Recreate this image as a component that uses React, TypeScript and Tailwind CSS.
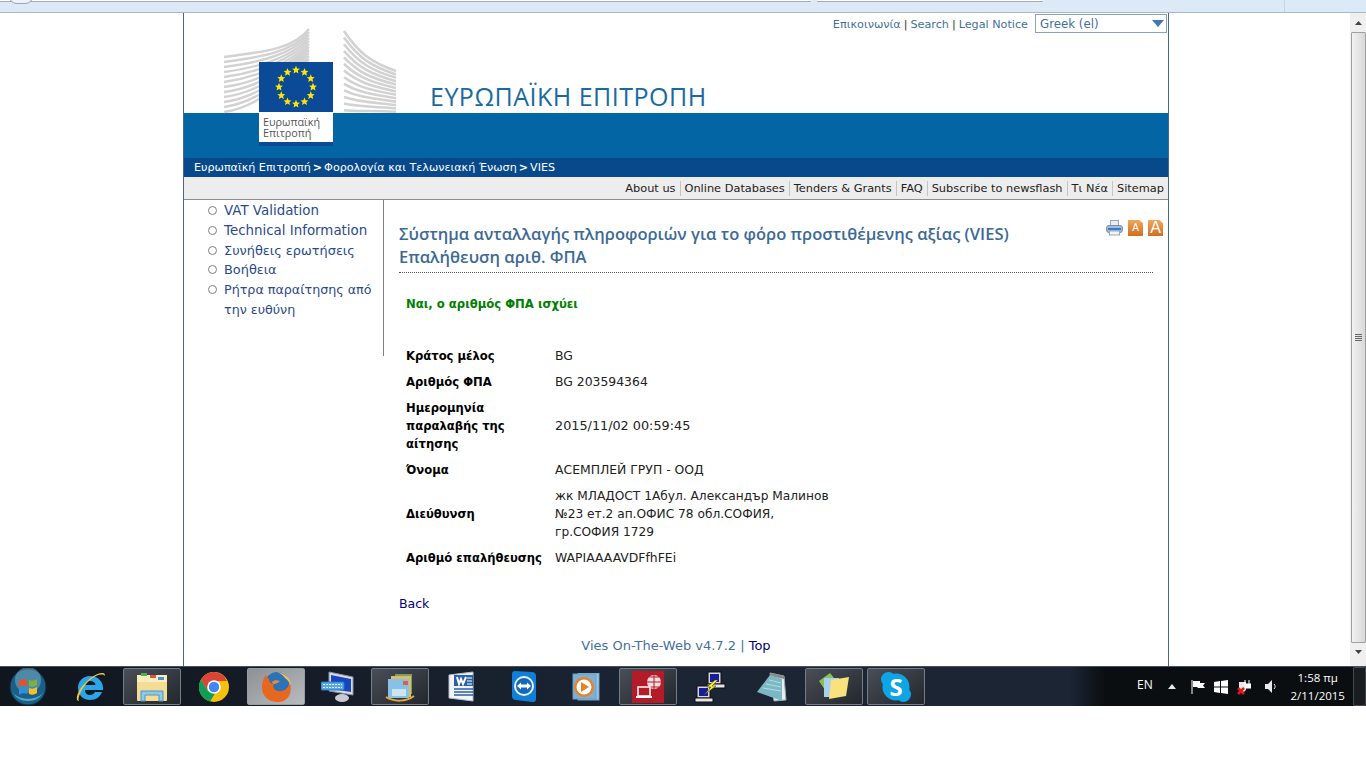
const NAV = ['About us', 'Online Databases', 'Tenders & Grants', 'FAQ', 'Subscribe to newsflash', 'Τι Νέα', 'Sitemap'];

const MENU = [
  { text: 'VAT Validation', size: 'text-[13.400px]' },
  { text: 'Technical Information', size: 'text-[13.400px]' },
  { text: 'Συνήθεις ερωτήσεις', size: 'text-[12.900px]' },
  { text: 'Βοήθεια', size: 'text-[12.900px]' },
  { text: 'Ρήτρα παραίτησης από την ευθύνη', size: 'text-[12.700px]' },
];

const ROWS = [
  { label: 'Κράτος μέλος', value: 'BG', size: 'text-[12.400px]' },
  { label: 'Αριθμός ΦΠΑ', value: 'BG 203594364', size: 'text-[12.400px]' },
  { label: 'Ημερομηνία παραλαβής της αίτησης', value: '2015/11/02 00:59:45', size: 'text-[12.800px]' },
  { label: 'Όνομα', value: 'АСЕМПЛЕЙ ГРУП - ООД', size: 'text-[12.400px]' },
  { label: 'Διεύθυνση', value: 'жк МЛАДОСТ 1Абул. Александър Малинов №23 ет.2 ап.ОФИС 78 обл.СОФИЯ, гр.СОФИЯ 1729', size: 'text-[12.200px]' },
  { label: 'Αριθμό επαλήθευσης', value: 'WAPIAAAAVDFfhFEi', size: 'text-[12.400px]' },
];

const starPoints = (cx: number, cy: number, r: number) =>
  Array.from({ length: 10 }, (_, i) => {
    const a = (i * Math.PI) / 5 - Math.PI / 2;
    const rad = i % 2 === 0 ? r : r * 0.45;
    return `${cx + rad * Math.cos(a)},${cy + rad * Math.sin(a)}`;
  }).join(' ');

const Logo = () => (
  <div className="absolute left-[36px] top-[11px] h-[125px] w-[180px]">
    <svg width="180" height="125" viewBox="220 24 180 125">
      {/* left wing */}
      {Array.from({ length: 12 }, (_, i) => (
        <path
          key={i}
          d={`M224 ${57 + i * 5} C 262 ${52 + i * 5}, 292 ${50 + i * 2}, 309 ${29 + i * 3}`}
          fill="none"
          stroke="#d2d2d2"
          strokeWidth="2.4"
        />
      ))}
      {/* right wing */}
      {Array.from({ length: 13 }, (_, i) => (
        <path
          key={i}
          d={`M344 ${31 + i * 6.6} C 358 ${52 + i * 5}, 370 ${62 + i * 4}, 396 ${71 + i * 3.4}`}
          fill="none"
          stroke="#d2d2d2"
          strokeWidth="2.6"
        />
      ))}
      <rect x="259" y="62" width="74" height="50" fill="#0b4a96" />
      <rect x="259" y="112" width="74" height="31" fill="#ffffff" />
      <rect x="259" y="142" width="74" height="4" fill="#0b4a96" />
      {Array.from({ length: 12 }, (_, i) => {
        const a = (i * Math.PI) / 6;
        return <polygon key={i} points={starPoints(296 + 17 * Math.sin(a), 87 - 17 * Math.cos(a), 4.2)} fill="#ffe600" />;
      })}
    </svg>
    <div className="absolute left-[43px] top-[92px] font-['Open_Sans',sans-serif] text-[10.800px] leading-[11px] text-[#555]">
      Ευρωπαϊκή
      <br />
      Επιτροπή
    </div>
  </div>
);

const PrintIcon = () => (
  <svg width="17" height="16" viewBox="0 0 17 16">
    <rect x="4.5" y="0.5" width="8" height="6" fill="#e9ecf1" stroke="#9aa6b4" />
    <rect x="0.5" y="5.5" width="16" height="7" rx="2.500" fill="#a9bbd0" stroke="#7d90a6" />
    <rect x="2" y="8" width="13" height="2" fill="#2b7fd6" />
    <rect x="3.5" y="11" width="10" height="4" fill="#f2f4f6" stroke="#9aa6b4" />
  </svg>
);

const FontIcon = ({ big }: { big?: boolean }) => (
  <span
    className={`flex h-[16px] w-[15px] items-center justify-center bg-gradient-to-b from-[#f2a658] to-[#d06f1e] font-['Liberation_Sans',sans-serif] leading-none text-white [clip-path:polygon(0_0,75%_0,100%_20%,100%_100%,0_100%)] ${big ? 'text-[16px]' : 'text-[10px]'}`}
  >
    A
  </span>
);

const Orb = () => (
  <svg width="38" height="38" viewBox="0 0 38 38">
    <circle cx="19" cy="19" r="18" fill="#1b5f86" stroke="#0d2c40" />
    <circle cx="19" cy="12" r="13" fill="#9cc8dc" opacity="0.4" />
    <path d="M10 13 C13 11 15 11 18 12 V18 C15 17 13 17 10 19 Z" fill="#e8502a" />
    <path d="M20 12 C23 13 25 13 28 11 V17 C25 19 23 19 20 18 Z" fill="#7cb13c" />
    <path d="M10 21 C13 19 15 19 18 20 V26 C15 25 13 25 10 27 Z" fill="#2f8fd8" />
    <path d="M20 20 C23 21 25 21 28 19 V25 C25 27 23 27 20 26 Z" fill="#f5c02c" />
    <path d="M4 24 C8 33 30 33 34 24 C30 36 8 36 4 24 Z" fill="#7fd8f0" opacity="0.6" />
  </svg>
);

const IeIcon = () => (
  <svg width="32" height="32" viewBox="0 0 32 32">
    <path d="M16 5 C9 5 4 10 4 17 C4 24 9 29 16 29 C22 29 26 26 28 21 H21 C20 23 18 24 16 24 C13 24 11 22 11 19 H29 C30 11 24 5 16 5 Z M11 14 C11 11 13 10 16 10 C19 10 21 11 21.500 14 Z" fill="#2aa5e8" />
    <path d="M29 2 C24 1 12 8 5 20 C2 26 2 30 5 30 C3 27 8 16 16 9 C22 4 28 2 31 5 C31 3 30 2 29 2 Z" fill="#f0c93a" />
  </svg>
);

const FolderIcon = () => (
  <svg width="34" height="32" viewBox="0 0 34 32">
    <rect x="2" y="4" width="30" height="26" rx="1" fill="#f3dc93" />
    <rect x="2" y="4" width="30" height="7" fill="#fbeebc" />
    <rect x="6" y="2" width="6" height="3" fill="#4caf50" />
    <rect x="15" y="4" width="6" height="3" fill="#d9534f" />
    <rect x="23" y="6" width="6" height="3" fill="#4a90d9" />
    <path d="M6 30 V20 H28 V30 H24 V24 H10 V30 Z" fill="#8fc8ea" stroke="#4d94c4" />
  </svg>
);

const ChromeIcon = () => (
  <svg width="30" height="30" viewBox="0 0 30 30">
    <circle cx="15" cy="15" r="15" fill="#f4c20d" />
    <path d="M15 0 A15 15 0 0 0 2 7.500 L8.500 18.500 L15 9 H28 A15 15 0 0 0 15 0 Z" fill="#db4437" />
    <path d="M2 7.500 A15 15 0 0 0 11 29.500 L17.500 19 L8.500 18.500 Z" fill="#0f9d58" />
    <circle cx="15" cy="15" r="6.800" fill="#fff" />
    <circle cx="15" cy="15" r="5.200" fill="#4285f4" />
  </svg>
);

const FirefoxIcon = () => (
  <svg width="32" height="32" viewBox="0 0 32 32">
    <circle cx="17" cy="13" r="12" fill="#2b72b8" />
    <path d="M6 4 C1 10 1 19 4 24 C8 31 19 33 25 29 C30 26 32 20 30 11 C29 17 24 21 18 20 C14 19 12 16 14 13 C11 13 9 11 9 8 C8 7 7 6 6 4 Z" fill="#e8671f" />
    <path d="M17 1 C24 2 31 7 31 15 C30 12 28 9 25 7 C23 4 20 2 17 1 Z" fill="#f6c344" />
    <path d="M12 11 C14 9 17 9 20 10 C18 12 16 13 14 13 C13 13 12 12 12 11 Z" fill="#ef8a2d" />
  </svg>
);

const KeyboardIcon = () => (
  <svg width="34" height="32" viewBox="0 0 34 32">
    <path d="M8 1 L32 6 V24 L8 20 Z" fill="#d7dce4" stroke="#8b94a0" />
    <path d="M10 4 L30 8 V21 L10 18 Z" fill="#1746c0" />
    <ellipse cx="21" cy="27" rx="7" ry="4" fill="#c7ccd2" />
    <rect x="0" y="11" width="23" height="8" rx="1" fill="#58a8e8" stroke="#2b78b8" />
    <path d="M2 13.500 H21 M2 16.500 H21" stroke="#d8ecff" strokeDasharray="2 1" />
  </svg>
);

const OutlookIcon = () => (
  <svg width="32" height="32" viewBox="0 0 32 32">
    <rect x="11" y="3" width="17" height="20" fill="#7ba05b" />
    <rect x="7" y="5" width="20" height="21" fill="#e2b86a" />
    <rect x="4" y="8" width="21" height="19" fill="#86c1e6" />
    <rect x="19" y="10" width="5" height="4" fill="#d9604a" />
    <rect x="8" y="18" width="14" height="7" fill="#cfe4f3" />
    <path d="M2 26 C10 31 22 31 30 25" stroke="#e5a83a" strokeWidth="2" fill="none" />
  </svg>
);

const WordIcon = () => (
  <svg width="32" height="32" viewBox="0 0 32 32">
    <path d="M3 4 L27 1 V30 L3 27 Z" fill="#f2f4f8" stroke="#b4bfcc" />
    <path d="M8 4 H27 V15 H8 Z" fill="#2b5fa8" />
    <path d="M11 6 L13 13 L15 8 L17 13 L20 6" stroke="#fff" strokeWidth="2" fill="none" />
    <path d="M21 7 H26 M21 10 H26 M21 13 H26" stroke="#fff" />
    <path d="M8 18 H27 M8 21 H27 M8 24 H27" stroke="#2b5fa8" strokeWidth="1.500" />
  </svg>
);

const TeamViewerIcon = () => (
  <svg width="26" height="32" viewBox="0 0 26 32">
    <path d="M1 3 C1 1 2 0 4 0 L21 1 C24 1 25 3 25 5 V28 C25 31 23 31 21 31 L5 29 C2 29 1 27 1 25 Z" fill="#0f7fd8" />
    <circle cx="13" cy="15" r="10" fill="#e8f2fb" />
    <circle cx="13" cy="15" r="8" fill="#1668b8" />
    <path d="M6 15 L10 11.500 V13.500 H16 V11.500 L20 15 L16 18.500 V16.500 H10 V18.500 Z" fill="#fff" />
  </svg>
);

const MediaIcon = () => (
  <svg width="28" height="28" viewBox="0 0 28 28">
    <rect x="6" y="0" width="21" height="27" fill="#9dc6e4" stroke="#6f9cbf" />
    <rect x="1" y="1" width="23" height="25" fill="#7fb0d4" stroke="#6f9cbf" />
    <circle cx="12" cy="14" r="10" fill="#e9812b" />
    <circle cx="12" cy="14" r="7.500" fill="#fff" />
    <path d="M9 9 L17 14 L9 19 Z" fill="#e9812b" />
  </svg>
);

const RedAppIcon = () => (
  <svg width="32" height="32" viewBox="0 0 32 32">
    <rect width="32" height="32" fill="#b31b28" />
    <circle cx="22" cy="11" r="7" fill="#fff" opacity="0.85" />
    <path d="M15 11 H29 M22 4 V18 M17 6 H27 M17 16 H27" stroke="#b31b28" />
    <rect x="6" y="16" width="12" height="9" fill="#b31b28" stroke="#fff" strokeWidth="1.500" />
    <rect x="4" y="25" width="16" height="2" fill="#fff" />
  </svg>
);

const PuttyIcon = () => (
  <svg width="32" height="32" viewBox="0 0 32 32">
    <rect x="14" y="1" width="13" height="12" fill="#d8d8d8" stroke="#111" />
    <rect x="16" y="3" width="9" height="8" fill="#1a1a9c" />
    <rect x="13" y="13" width="18" height="4" fill="#e4e4e4" stroke="#111" />
    <rect x="3" y="15" width="13" height="12" fill="#d8d8d8" stroke="#111" />
    <rect x="5" y="17" width="9" height="8" fill="#1a1a9c" />
    <rect x="1" y="27" width="18" height="4" fill="#e4e4e4" stroke="#111" />
    <path d="M21 9 L13 16 H17 L10 24 L22 15 H18 L24 9 Z" fill="#ffee22" stroke="#333" strokeWidth="0.500" />
  </svg>
);

const NotepadIcon = () => (
  <svg width="32" height="32" viewBox="0 0 32 32">
    <path d="M14 2 L28 5 L30 29 L18 30 Z" fill="#e8eef0" stroke="#9aa6ac" />
    <path d="M14 2 L28 5 L28 8 L14 5 Z" fill="#8a8a8a" />
    <path d="M14 4 L26 8 L26 30 L1 21 Z" fill="#7cb8c4" />
    <path d="M13 9 L25 12 M10 13 L25 16 M7 17 L25 20" stroke="#b4dde4" />
  </svg>
);

const StickyIcon = () => (
  <svg width="32" height="32" viewBox="0 0 32 32">
    <path d="M1 10 L12 2 L20 12 L9 22 Z" fill="#8cc152" />
    <path d="M6 7 H21 V26 H6 Z" fill="#a9d1ee" />
    <path d="M13 9 L31 6 L28 25 L11 28 Z" fill="#f9e27c" />
  </svg>
);

const SkypeIcon = () => (
  <span className="relative flex h-[32px] w-[32px] items-center justify-center font-['Open_Sans',sans-serif] text-[24px] font-bold leading-none text-white">
    <svg width="32" height="32" viewBox="0 0 32 32" className="absolute inset-0">
      <circle cx="16" cy="16" r="13.500" fill="#0ea5e6" />
      <circle cx="8.500" cy="8.500" r="7.500" fill="#0ea5e6" />
      <circle cx="23.500" cy="23.500" r="7.500" fill="#0ea5e6" />
    </svg>
    <span className="relative">S</span>
  </span>
);

const TASKS = [
  { icon: <IeIcon /> },
  { icon: <FolderIcon />, open: true },
  { icon: <ChromeIcon /> },
  { icon: <FirefoxIcon />, open: true, active: true },
  { icon: <KeyboardIcon /> },
  { icon: <OutlookIcon />, open: true },
  { icon: <WordIcon /> },
  { icon: <TeamViewerIcon /> },
  { icon: <MediaIcon /> },
  { icon: <RedAppIcon />, open: true },
  { icon: <PuttyIcon /> },
  { icon: <NotepadIcon /> },
  { icon: <StickyIcon />, open: true },
  { icon: <SkypeIcon />, open: true },
];

const Taskbar = () => (
  <div className="flex h-[40px] items-stretch border-t border-[#46515e] bg-gradient-to-r from-[#10161e] via-[#1b2534] to-[#1b2534] pl-[1px] font-['Open_Sans',sans-serif]">
    <div className="flex w-[60px] items-center pl-[8px]">
      <Orb />
    </div>
    <div className="flex gap-1 py-[1px]">
      {TASKS.map((t, i) => (
        <div
          key={i}
          className={`flex w-[58px] items-center justify-center rounded-[2px] ${
            t.active
              ? 'border border-[#9a9ea3] bg-gradient-to-br from-[#8d9094] to-[#b9bcbf]'
              : t.open
                ? 'border border-[#777d85] bg-gradient-to-br from-[#4a4f57] to-[#23282f]'
                : ''
          }`}
        >
          {t.icon}
        </div>
      ))}
    </div>
    <div className="ml-auto flex w-[296px] items-center bg-gradient-to-r from-[#1b2534] to-[#0b0e11] to-[12%] text-white">
      <span className="ml-[67px] mb-[4px] text-[12px]">EN</span>
      <svg width="8" height="5" viewBox="0 0 8 5" className="ml-[15px]">
        <path d="M0 5 L4 0 L8 5 Z" fill="#e8e8e8" />
      </svg>
      <svg width="15" height="14" viewBox="0 0 15 14" className="ml-[15px]">
        <path d="M1 0 V14" stroke="#fff" />
        <path d="M2 1 H9 V3 H14 L12 5.500 L14 8 H7 L6 7 H2 Z" fill="#fff" />
      </svg>
      <svg width="14" height="14" viewBox="0 0 14 14" className="ml-[8px]">
        <path d="M0 2 L6 1 V6.500 H0 Z M7 1 L14 0 V6.500 H7 Z M0 7.500 H6 V13 L0 12 Z M7 7.500 H14 V14 L7 13 Z" fill="#fff" />
      </svg>
      <svg width="14" height="16" viewBox="0 0 14 16" className="ml-[9px]">
        <path d="M2 3 H9 V10 C9 12 7 13 5 13 H2 Z" fill="#e8e8e8" />
        <path d="M8 1 V5 M12 1 V5 M7 5 H14 V9 H8" stroke="#fff" fill="#fff" />
        <path d="M1 9 L7 15 M7 9 L1 15" stroke="#e01818" strokeWidth="2.500" />
      </svg>
      <svg width="12" height="13" viewBox="0 0 12 13" className="ml-[14px]">
        <path d="M0 4 H3 L7 0 V13 L3 9 H0 Z" fill="#e8e8e8" />
        <path d="M9 4 C10.500 5.500 10.500 7.500 9 9" stroke="#e8e8e8" fill="none" />
      </svg>
      <div className="ml-[10px] flex w-[62px] flex-col items-center text-[11.500px] leading-[18px]">
        <span>1:58 πμ</span>
        <span>2/11/2015</span>
      </div>
      <div className="ml-auto h-full w-[13px] self-stretch rounded-[1px] border border-[#45494e] bg-[#1a1d20]" />
    </div>
  </div>
);

const Scrollbar = () => (
  <div className="flex w-[16px] flex-col items-center bg-[#f0f0f0]">
    <svg width="7" height="4" viewBox="0 0 7 4" className="mt-[8px]">
      <path d="M0 4 L3.500 0 L7 4 Z" fill="#444" />
    </svg>
    <div className="mt-[7px] flex h-[611px] w-[15px] items-center justify-center rounded-[1px] border border-[#a0a0a0] bg-gradient-to-r from-[#f2f2f2] to-[#d8d8d8]">
      <div className="flex flex-col gap-[1px]">
        <div className="h-[1px] w-[7px] bg-[#666]" />
        <div className="h-[1px] w-[7px] bg-[#666]" />
        <div className="h-[1px] w-[7px] bg-[#666]" />
        <div className="h-[1px] w-[7px] bg-[#666]" />
      </div>
    </div>
    <svg width="7" height="4" viewBox="0 0 7 4" className="mt-[7px]">
      <path d="M0 0 L3.500 4 L7 0 Z" fill="#444" />
    </svg>
  </div>
);

export default function App() {
  return (
    <div className="flex h-[768px] w-[1366px] flex-col overflow-hidden bg-white font-['DejaVu_Sans',sans-serif]">
      {/* browser chrome, cut off at the top */}
      <div className="relative flex h-[13px] items-start gap-[6px] border-b border-[#a9b8c8] bg-[#dce9f7]">
        <div className="h-[2px] w-[811px] border-b border-[#a3adb8] bg-white" />
        <div className="h-[2px] w-[226px] border-b border-[#a3adb8] bg-white" />
        <div className="absolute left-[8px] top-[-14px] h-[18px] w-[26px] rounded-full border border-[#9aa6b2] bg-[#eef3f9]" />
        <div className="absolute left-[1284px] top-0 h-full w-[1px] bg-[#c8d4e0]" />
      </div>

      <div className="flex h-[653px]">
        <div className="w-[183px]" />
        <div className="flex w-[986px] flex-col border-x border-[#47688a]">
          {/* header */}
          <div className="relative">
            <div className="flex h-[100px] items-start justify-end gap-[7px] pr-[1px] pt-[1px] text-[11.200px] text-[#45709e]">
              <div className="flex items-center pt-[4px] leading-[14px]">
                <span>Επικοινωνία</span>
                <span className="mx-[3px] text-[#333]">|</span>
                <span>Search</span>
                <span className="mx-[3px] text-[#333]">|</span>
                <span>Legal Notice</span>
              </div>
              <div className="flex h-[19px] w-[132px] items-center justify-between border border-[#8aa2c0] pl-[4px] pr-[2px] text-[11.800px]">
                <span className="pt-[2px]">Greek (el)</span>
                <svg width="12" height="7" viewBox="0 0 12 7">
                  <path d="M0 0 H12 L6 7 Z" fill="#3f78b4" />
                </svg>
              </div>
            </div>
            <div className="h-[45px] bg-[#0465a5]" />
            <div className="flex h-[19px] items-center bg-[#07498a] pl-[10px] pt-[1px] text-[11.150px] text-white">
              <span>Ευρωπαϊκή Επιτροπή</span>
              <span className="mx-[2px] font-bold">&gt;</span>
              <span>Φορολογία και Τελωνειακή Ένωση</span>
              <span className="mx-[2px] font-bold">&gt;</span>
              <span>VIES</span>
            </div>
            <div className="flex h-[23px] items-center justify-end border-b border-[#8a8f94] bg-[#ededed] text-[11.350px] text-[#222]">
              {NAV.map((n, i) => (
                <span key={n} className={`px-[4px] leading-[15px] ${i > 0 ? 'border-l border-[#c4c4c4]' : ''}`}>
                  {n}
                </span>
              ))}
            </div>
            <Logo />
            <h1 className="absolute left-[246px] top-[68px] font-['Open_Sans',sans-serif] text-[25px] font-normal leading-[30px] tracking-[0.5px] text-[#1a6aa0]">
              ΕΥΡΩΠΑΪΚΗ ΕΠΙΤΡΟΠΗ
            </h1>
          </div>

          {/* body */}
          <div className="flex flex-1">
            <div className="h-[156px] w-[200px] border-r border-[#808080]">
              <ul className="pt-[1px] leading-[19.800px] text-[#2a4a8a]">
                {MENU.map((m) => (
                  <li key={m.text} className="flex pl-[24px]">
                    <span className="mr-[7px] mt-[5px] h-[9px] w-[9px] shrink-0 rounded-full border border-[#808080]" />
                    <span className={`w-[155px] ${m.size}`}>{m.text}</span>
                  </li>
                ))}
              </ul>
            </div>

            <div className="flex flex-1 flex-col pl-[15px] pr-[15px]">
              <div className="flex justify-between border-b border-dotted border-[#555] pb-[4px] pt-[22px]">
                <h2 className="font-['Open_Sans',sans-serif] text-[16.550px] font-semibold leading-[23px] text-[#3d6a95]">
                  Σύστημα ανταλλαγής πληροφοριών για το φόρο προστιθέμενης αξίας (VIES)
                  <br />
                  Επαλήθευση αριθ. ΦΠΑ
                </h2>
                <div className="-mr-[10px] -mt-[2px] flex h-[16px] gap-[5px]">
                  <PrintIcon />
                  <FontIcon />
                  <FontIcon big />
                </div>
              </div>
              <p className="mt-[22px] pl-[7px] text-[11.650px] font-bold leading-[18px] text-[#008000]">Ναι, ο αριθμός ΦΠΑ ισχύει</p>
              <div className="mt-[34px] grid grid-cols-[149px_280px] items-center gap-y-2 pl-[7px] leading-[18px] text-[#222]">
                {ROWS.map((r) => (
                  <div key={r.label} className="contents">
                    <span className="w-[140px] text-[11.600px] font-bold text-black">{r.label}</span>
                    <span className={r.size}>{r.value}</span>
                  </div>
                ))}
              </div>
              <a className="mt-[28px] text-[12.500px] leading-[18px] text-[#000080]">Back</a>
            </div>
          </div>

          {/* footer */}
          <div className="pb-[11px] text-center text-[13px] leading-[18px] text-[#45709e]">
            Vies On-The-Web v4.7.2 | <span className="text-[#000080]">Top</span>
          </div>
        </div>
        <div className="w-[181px]" />
        <Scrollbar />
      </div>

      <Taskbar />
    </div>
  );
}
